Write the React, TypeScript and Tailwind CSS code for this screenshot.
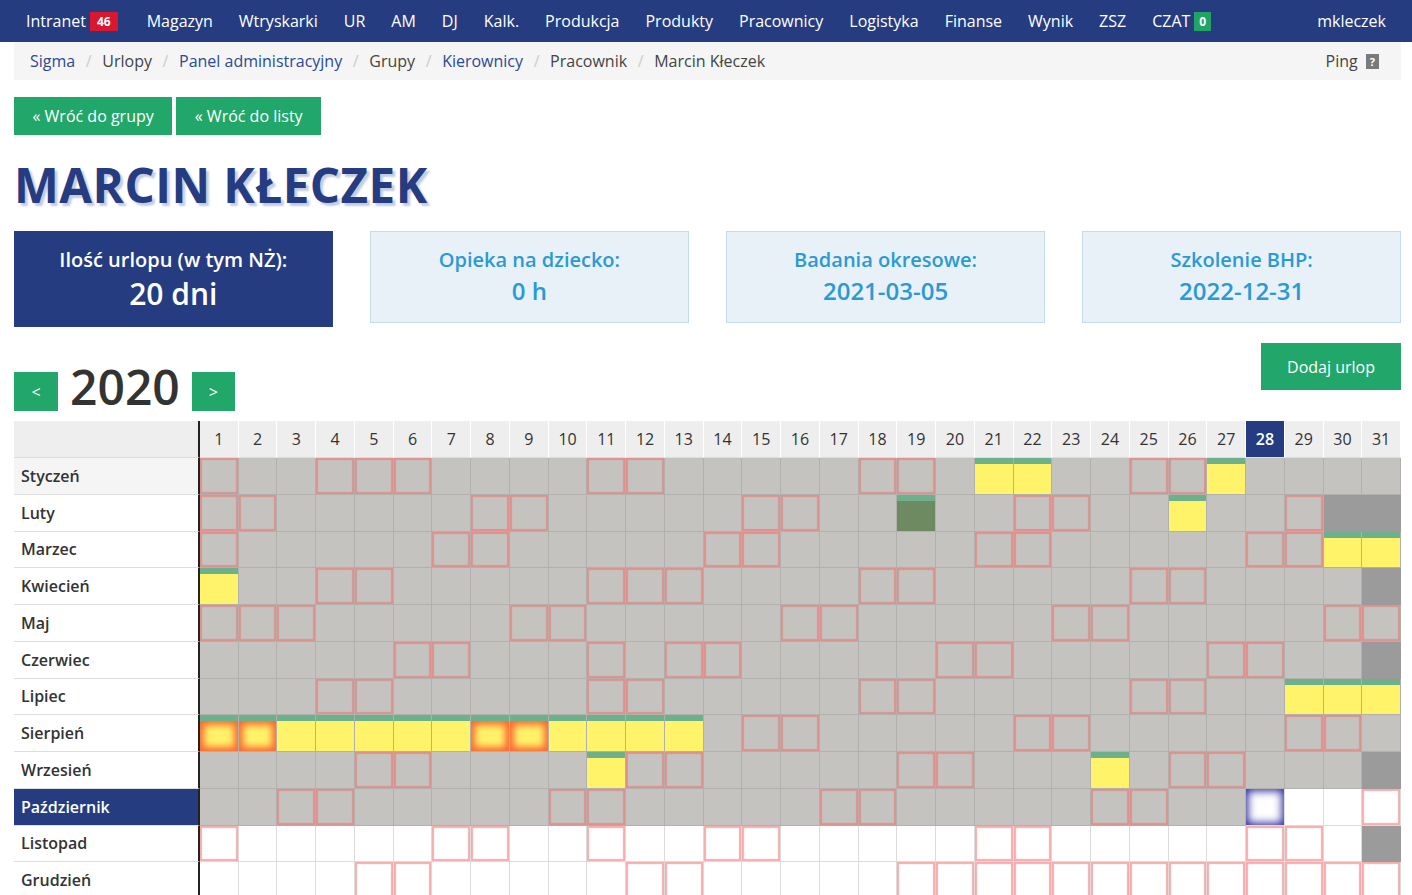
import clsx from 'clsx'

const navItems = ['Magazyn', 'Wtryskarki', 'UR', 'AM', 'DJ', 'Kalk.', 'Produkcja', 'Produkty', 'Pracownicy', 'Logistyka', 'Finanse', 'Wynik', 'ZSZ']

const crumbs = [
  { label: 'Sigma', link: true },
  { label: 'Urlopy', link: false },
  { label: 'Panel administracyjny', link: true },
  { label: 'Grupy', link: false },
  { label: 'Kierownicy', link: true },
  { label: 'Pracownik', link: false },
]

const months = ['Styczeń', 'Luty', 'Marzec', 'Kwiecień', 'Maj', 'Czerwiec', 'Lipiec', 'Sierpień', 'Wrzesień', 'Październik', 'Listopad', 'Grudzień']

// dni wolne poza weekendami
const holidays: Record<number, number[]> = {
  0: [1, 6],
  3: [13],
  4: [1, 3],
  5: [11],
  10: [11],
  11: [21, 22, 23, 24, 25, 28, 29, 30, 31],
}

const leave: Record<number, number[]> = {
  0: [21, 22, 27],
  1: [26],
  2: [30, 31],
  3: [1],
  6: [29, 30, 31],
  7: [1, 2, 3, 4, 5, 6, 7, 8, 9, 10, 11, 12, 13],
  8: [11, 24],
}

const TODAY = { m: 9, d: 28 }
const days = Array.from({ length: 31 }, (_, i) => i + 1)

function DayCell({ m, d }: { m: number; d: number }) {
  const dim = new Date(2020, m + 1, 0).getDate()
  if (d > dim) {
    return <div className="h-[36.75px] border-b border-r border-[#9b9b9b] bg-[#9b9b9b]" />
  }
  const dow = new Date(2020, m, d).getDay()
  const red = dow === 0 || dow === 6 || (holidays[m] ?? []).includes(d)
  const isToday = m === TODAY.m && d === TODAY.d
  const future = m > TODAY.m || (m === TODAY.m && d > TODAY.d)
  const onLeave = (leave[m] ?? []).includes(d)
  const sick = m === 1 && d === 19

  if (onLeave || sick) {
    return (
      <div className="flex h-[36.75px] flex-col border-b border-r border-[#b2b0ad] bg-[#c5c3bf]">
        <div className="h-[6px] bg-[#6cb08c]" />
        <div
          className={clsx(
            'flex-1',
            sick ? 'bg-[#6d8a60]' : 'bg-[#fff36a]',
            onLeave && red && 'shadow-[inset_0_0_7px_4px_rgba(250,80,40,0.85)]'
          )}
        />
      </div>
    )
  }

  return (
    <div
      className={clsx(
        'h-[36.75px] border-b border-r',
        future || isToday ? 'border-[#dcdcdc] bg-white' : 'border-[#b2b0ad] bg-[#c5c3bf]',
        red && !isToday && 'shadow-[inset_0_0_1px_2px_rgba(240,105,105,0.55)]',
        isToday && 'shadow-[inset_0_0_8px_2px_rgba(30,30,150,0.95)]'
      )}
    />
  )
}

export default function App() {
  return (
    <div className="min-h-screen bg-white font-['Open_Sans',sans-serif] text-[#333]">
      <nav className="flex h-[42px] items-center bg-[#253c80] px-[13px] text-[16px] text-white">
        <span className="flex items-center pl-[13px] pr-[16px]">
          Intranet
          <span className="ml-[4px] bg-[#d9182d] px-[7px] text-[12px] font-bold leading-[19px]">46</span>
        </span>
        {navItems.map(item => (
          <span key={item} className="px-[13px]">{item}</span>
        ))}
        <span className="flex items-center px-[13px]">
          CZAT
          <span className="ml-[4px] bg-[#21a366] px-[5px] text-[12px] font-bold leading-[19px]">0</span>
        </span>
        <span className="ml-auto px-[13px]">mkleczek</span>
      </nav>

      <div className="pl-[14px] pr-[11px]">
        <div className="flex h-[38px] items-center bg-[#f5f5f5] pl-[16px] pr-[22px] text-[16px]">
          {crumbs.map(c => (
            <span key={c.label} className="flex items-center">
              <span className={c.link ? 'text-[#2c4a94]' : 'text-[#444]'}>{c.label}</span>
              <span className="px-[10.6px] text-[#ccc]">/</span>
            </span>
          ))}
          <span className="text-[#444]">Marcin Kłeczek</span>
          <span className="ml-auto flex items-center text-[#444]">
            Ping
            <span className="ml-[8px] bg-[#7a7a7a] px-[4px] text-[11px] font-bold leading-[15px] text-white">?</span>
          </span>
        </div>

        <div className="mt-[17px] flex gap-[4px]">
          <button className="h-[38px] bg-[#21a769] px-[18.5px] text-[16px] text-white">« Wróć do grupy</button>
          <button className="h-[38px] bg-[#21a769] px-[18.5px] text-[16px] text-white">« Wróć do listy</button>
        </div>

        <h1 className="mt-[20px] text-[47.5px] font-bold leading-[60px] tracking-[0.5px] text-[#253c80] [text-shadow:3px_3px_2px_rgba(60,85,150,0.3)]">
          MARCIN KŁECZEK
        </h1>

        <div className="mt-[16px] grid grid-cols-4 items-start gap-[37.5px]">
          <div className="flex h-[96px] flex-col items-center justify-center bg-[#253c80] pt-[2px] text-white">
            <div className="text-[20px] font-semibold leading-[28px]">Ilość urlopu (w tym NŻ):</div>
            <div className="text-[30px] font-semibold leading-[40px]">20 dni</div>
          </div>
          {[
            ['Opieka na dziecko:', '0 h'],
            ['Badania okresowe:', '2021-03-05'],
            ['Szkolenie BHP:', '2022-12-31'],
          ].map(([title, value]) => (
            <div key={title} className="flex h-[92px] flex-col items-center justify-center border border-[#c3dcec] bg-[#e8f1f8] text-[#2b9ad3]">
              <div className="text-[20px] font-semibold leading-[28px]">{title}</div>
              <div className="text-[24px] font-semibold leading-[34px]">{value}</div>
            </div>
          ))}
        </div>

        <div className="mt-[16px] flex items-start justify-between">
          <div className="mt-[29px] flex items-center gap-[12px]">
            <button className="h-[39px] w-[44px] bg-[#21a769] text-[16px] text-white">&lt;</button>
            <span className="-translate-y-[5px] text-[48px] font-semibold leading-[39px] text-[#333]">2020</span>
            <button className="h-[39px] w-[43px] bg-[#21a769] text-[16px] text-white">&gt;</button>
          </div>
          <button className="h-[47px] w-[140px] bg-[#21a769] text-[16px] text-white">Dodaj urlop</button>
        </div>

        <div className="mt-[10px] grid grid-cols-[186px_repeat(31,minmax(0,1fr))]">
          <div className="h-[37px] border-b border-r-2 border-b-[#ddd] border-r-[#222] bg-[#eee]" />
          {days.map(d => (
            <div
              key={d}
              className={clsx(
                'flex h-[37px] items-center justify-center border-b border-r border-b-[#ddd] border-r-white text-[16px]',
                d === TODAY.d ? 'bg-[#253c80] font-semibold text-white' : 'bg-[#eee] text-[#333]'
              )}
            >
              {d}
            </div>
          ))}
          {months.map((name, m) => (
            <div key={name} className="contents">
              <div
                className={clsx(
                  'flex h-[36.75px] items-center border-b border-r-2 border-b-[#ddd] border-r-[#222] pl-[7px] text-[16px] font-semibold',
                  m === TODAY.m ? 'bg-[#253c80] text-white' : m === 0 ? 'bg-[#f5f5f5]' : 'bg-white'
                )}
              >
                {name}
              </div>
              {days.map(d => (
                <DayCell key={d} m={m} d={d} />
              ))}
            </div>
          ))}
        </div>
      </div>
    </div>
  )
}
